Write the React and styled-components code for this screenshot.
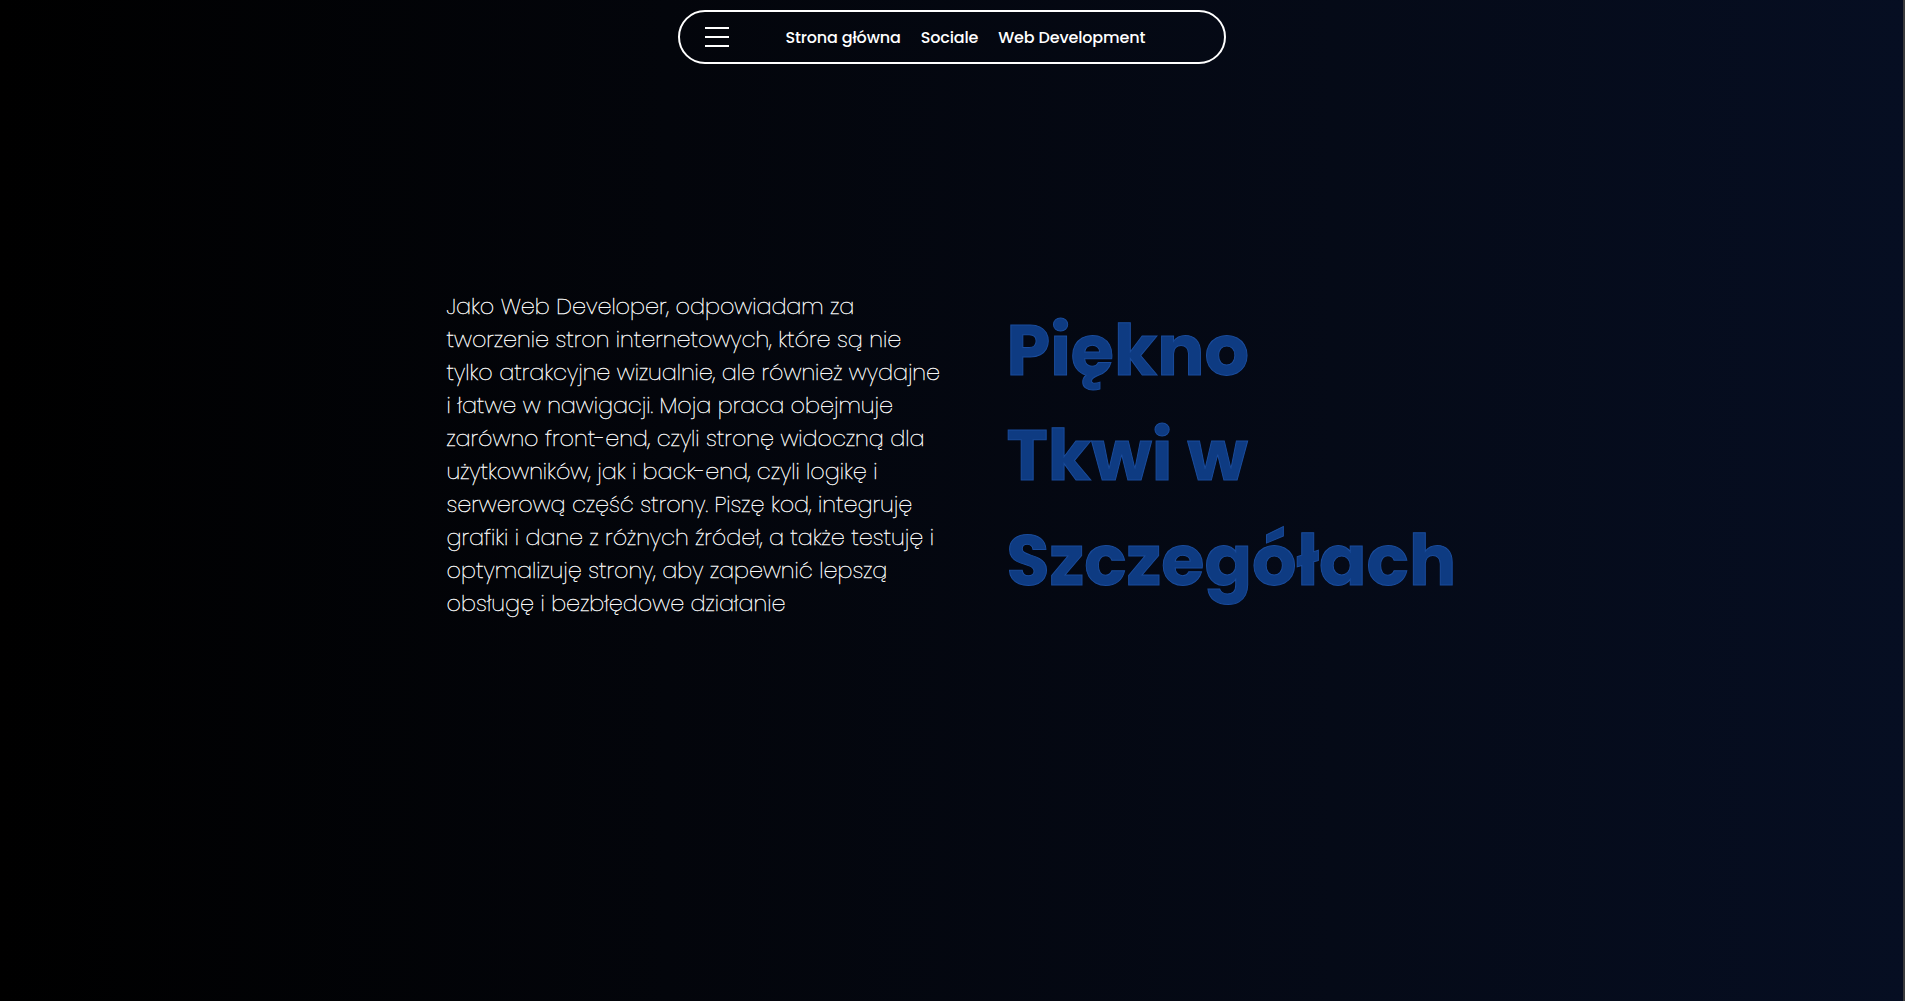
import styled, { createGlobalStyle } from "styled-components";

const GlobalStyle = createGlobalStyle`
  * {
    box-sizing: border-box;
  }

  html,
  body {
    margin: 0;
    padding: 0;
    background: #000000;
  }

  body {
    font-family: "Poppins", "Open Sans", "Noto Sans", sans-serif;
    color: #ffffff;
  }
`;

const Page = styled.div`
  width: 100%;
  min-height: 100vh;
  background: linear-gradient(90deg, #000000 0%, #03050b 35%, #050a17 70%, #060e22 100%);
  border-right: 2px solid #3a3a3c;
  display: flex;
  flex-direction: column;
  align-items: center;
`;

const Nav = styled.nav`
  width: 548px;
  height: 54px;
  margin-top: 10px;
  border: 2px solid #ffffff;
  border-radius: 28px;
  display: flex;
  align-items: center;
  padding: 0 25px;
`;

const Burger = styled.button`
  width: 24px;
  height: 20px;
  padding: 0;
  border: none;
  background: transparent;
  display: flex;
  flex-direction: column;
  justify-content: space-between;
  cursor: pointer;

  span {
    display: block;
    height: 2px;
    width: 100%;
    background: #ffffff;
  }
`;

const Links = styled.ul`
  list-style: none;
  margin: 0 0 0 57px;
  padding: 0;
  display: flex;
  gap: 20px;
`;

const LinkItem = styled.li`
  a {
    color: #ffffff;
    text-decoration: none;
    font-size: 16px;
    font-weight: 500;
    letter-spacing: -0.15px;
    white-space: nowrap;
  }
`;

const Hero = styled.section`
  display: flex;
  align-items: center;
  justify-content: center;
  gap: 60px;
  padding-top: 226px;
`;

const Description = styled.p`
  width: 500px;
  margin: 0;
  font-size: 22.3px;
  font-weight: 200;
  line-height: 33px;
  color: #f6f6f6;
  -webkit-text-stroke: 0.4px #f6f6f6;
`;

const Headline = styled.h1`
  width: 450px;
  margin: 0;
  font-size: 70px;
  font-weight: 700;
  line-height: 105px;
  color: #0e3b82;
  -webkit-text-stroke: 1px #1a4c9c;
`;

const App = () => {
  return (
    <>
      <GlobalStyle />
      <Page>
        <Nav>
          <Burger aria-label="menu">
            <span />
            <span />
            <span />
          </Burger>
          <Links>
            <LinkItem>
              <a href="#home">Strona główna</a>
            </LinkItem>
            <LinkItem>
              <a href="#social">Sociale</a>
            </LinkItem>
            <LinkItem>
              <a href="#webdev">Web Development</a>
            </LinkItem>
          </Links>
        </Nav>
        <Hero>
          <Description>
            Jako Web Developer, odpowiadam za tworzenie stron internetowych,
            które są nie tylko atrakcyjne wizualnie, ale również wydajne i
            łatwe w nawigacji. Moja praca obejmuje zarówno front-end, czyli
            stronę widoczną dla użytkowników, jak i back-end, czyli logikę i
            serwerową część strony. Piszę kod, integruję grafiki i dane z
            różnych źródeł, a także testuję i optymalizuję strony, aby
            zapewnić lepszą obsługę i bezbłędowe działanie
          </Description>
          <Headline>
            Piękno
            <br />
            Tkwi w
            <br />
            Szczegółach
          </Headline>
        </Hero>
      </Page>
    </>
  );
};

export default App;
